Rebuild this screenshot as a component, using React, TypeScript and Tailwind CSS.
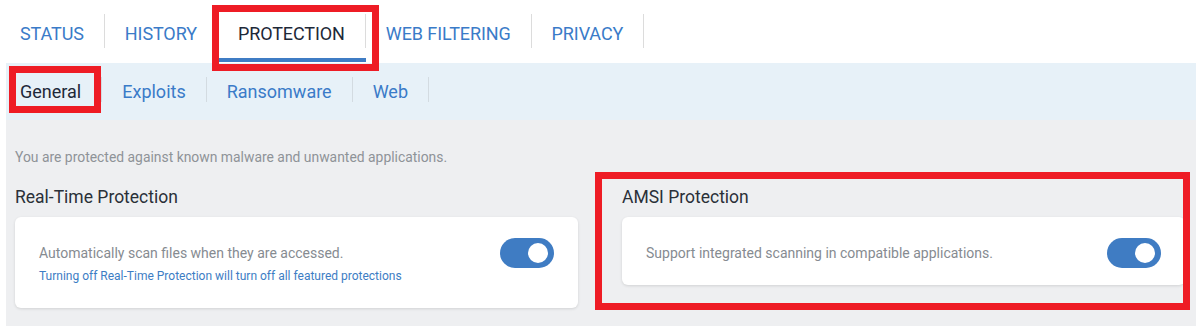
import { useState } from "react";

const topTabs = ["STATUS", "HISTORY", "PROTECTION", "WEB FILTERING", "PRIVACY"];
const subTabs = ["General", "Exploits", "Ransomware", "Web"];

function Toggle({ on, onChange }: { on: boolean; onChange: () => void }) {
  return (
    <button
      onClick={onChange}
      className={`flex h-[30px] w-[54px] shrink-0 items-center rounded-full px-[6px] ${
        on ? "justify-end bg-[#3f7cc3]" : "justify-start bg-[#c5cad0]"
      }`}
    >
      <span className="h-[20px] w-[20px] rounded-full bg-white" />
    </button>
  );
}

function Setting({
  title,
  text,
  note,
}: {
  title: string;
  text: string;
  note?: string;
}) {
  const [on, setOn] = useState(true);
  return (
    <div className="flex flex-col">
      <h3 className="h-[22px] text-[17.5px] leading-[22px] text-[#2a3038]">{title}</h3>
      <div
        className={`mt-[9px] flex items-start justify-between rounded-[6px] bg-white pl-6 pr-6 pt-[21px] shadow-[0_1px_3px_rgba(0,0,0,0.12)] ${
          note ? "pb-[24px]" : "pb-[17px]"
        }`}
      >
        <div className="mt-[5px] flex flex-col">
          <p className="text-[14px] leading-[20px] text-[#868b91]">{text}</p>
          {note && (
            <p className="mt-[5px] text-[12px] leading-[16px] text-[#3d7dc4]">{note}</p>
          )}
        </div>
        <Toggle on={on} onChange={() => setOn(!on)} />
      </div>
    </div>
  );
}

export default function App() {
  const [tab, setTab] = useState("PROTECTION");
  const [sub, setSub] = useState("General");

  return (
    <div
      className="relative h-[326px] w-[1196px] overflow-hidden bg-white"
      style={{ fontFamily: "Roboto, 'Liberation Sans', sans-serif" }}
    >
      {/* main tabs */}
      <div className="flex h-[63px]">
        {topTabs.map((t) => (
          <button key={t} onClick={() => setTab(t)} className="flex h-[63px] flex-col">
            <div className="pt-[14px]">
              <span
                className={`flex h-[34px] items-center border-r border-[#dcdcdc] px-5 pt-[4px] text-[18px] tracking-[-0.1px] ${
                  tab === t ? "text-[#1d2838]" : "text-[#3a7bc8]"
                }`}
              >
                {t}
              </span>
            </div>
            {tab === t && <div className="mt-auto mb-[1px] h-[4px] w-full bg-[#3f7cc4]" />}
          </button>
        ))}
      </div>

      {/* sub tabs */}
      <div className="ml-[6px] flex h-[57px] items-start bg-[#e7f1f8] pt-[14px]">
        {subTabs.map((s, i) => (
          <button
            key={s}
            onClick={() => setSub(s)}
            className={`flex h-[25px] items-center border-r border-[#d3dbe1] pr-5 pt-[4px] text-[18px] ${
              i === 0 ? "pl-[14px]" : "pl-5"
            } ${sub === s ? "text-[#1d2838]" : "text-[#3a7bc8]"}`}
          >
            {s}
          </button>
        ))}
      </div>

      {/* content */}
      <div className="ml-[6px] h-[206px] bg-[#eeeff1] pl-[9px] pr-[11px] pt-[28px]">
        <p className="text-[13.9px] leading-[18px] text-[#8e9398]">
          You are protected against known malware and unwanted applications.
        </p>
        <div className="mt-[20px] grid grid-cols-2 items-start gap-[44px]">
          <Setting
            title="Real-Time Protection"
            text="Automatically scan files when they are accessed."
            note="Turning off Real-Time Protection will turn off all featured protections"
          />
          <Setting
            title="AMSI Protection"
            text="Support integrated scanning in compatible applications."
          />
        </div>
      </div>

      {/* annotation boxes */}
      <div className="pointer-events-none absolute left-[212px] top-[5px] h-[66px] w-[167px] border-[7px] border-[#ee1c25]" />
      <div className="pointer-events-none absolute left-[9px] top-[66px] h-[47px] w-[92px] border-[7px] border-[#ee1c25]" />
      <div className="pointer-events-none absolute left-[595px] top-[172px] h-[138px] w-[595px] border-[7px] border-[#ee1c25]" />
    </div>
  );
}
